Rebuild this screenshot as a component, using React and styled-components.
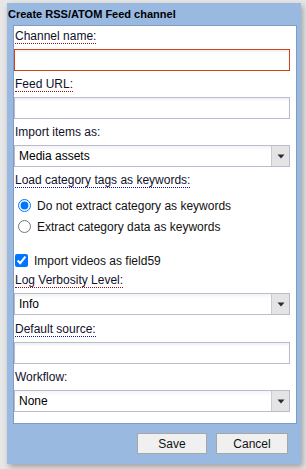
import React from 'react';
import styled, { createGlobalStyle } from 'styled-components';

const Global = createGlobalStyle`
  html, body { margin: 0; padding: 0; }
  body {
    background: #e6e6e6;
    font-family: "Liberation Sans", Arial, sans-serif;
    width: 306px;
    height: 469px;
    overflow: hidden;
  }
`;

const Page = styled.div`
  padding: 3px 0 0 7px;
`;

const Dialog = styled.div`
  width: 294px;
  height: 461px;
  box-sizing: border-box;
  background: #99b9e1;
  box-shadow: 2px 3px 6px rgba(0, 0, 0, 0.3);
  display: flex;
  flex-direction: column;
`;

const Title = styled.div`
  height: 22px;
  line-height: 23px;
  padding-left: 1px;
  font-size: 11px;
  font-weight: bold;
  color: #000;
  white-space: nowrap;
`;

const Panel = styled.div`
  margin: 0 4px 0 6px;
  background: #fff;
  border: 1px solid #7f9cc4;
  padding: 3px 6px 11px 0;
  display: flex;
  flex-direction: column;
`;

const Field = styled.div`
  display: flex;
  flex-direction: column;
  margin-top: ${p => p.$mt ?? 0}px;
`;

const Label = styled.div`
  font-size: 12px;
  line-height: 15px;
  height: 15px;
  color: #10102a;
  padding-left: 1px;
  margin-bottom: ${p => p.$mb ?? 5}px;
  white-space: nowrap;
`;

const LabelText = styled.span`
  border-bottom: ${p => (p.$line ? `1px dotted ${p.$line}` : 'none')};
`;

const TextInput = styled.input`
  box-sizing: border-box;
  width: 100%;
  height: 22px;
  margin: 0;
  border: 1px solid ${p => (p.$error ? '#d4421a' : '#b8bccd')};
  background: #fff;
  box-shadow: inset 0 2px 2px rgba(0, 0, 0, 0.06);
  font: 12px "Liberation Sans", Arial, sans-serif;
  outline: none;
`;

const SelectBox = styled.div`
  box-sizing: border-box;
  width: 100%;
  height: 22px;
  display: flex;
  border: 1px solid #b8bccd;
  background: linear-gradient(#f4f4f4, #fff 5px);
`;

const SelectValue = styled.div`
  flex: 1;
  padding-left: 4px;
  font-size: 12px;
  line-height: 20px;
  color: #000;
`;

const ArrowBox = styled.div`
  width: 17px;
  background: #e4e4e4;
  border-left: 1px solid #c9cbd4;
  display: flex;
  align-items: center;
  justify-content: center;
`;

const OptionGroup = styled.div`
  display: flex;
  flex-direction: column;
  margin-top: ${p => p.$mt ?? 0}px;
`;

const OptionRow = styled.label`
  display: flex;
  align-items: center;
  height: 21px;
  font-size: 12px;
  color: #111;
  white-space: nowrap;
`;

const Radio = styled.input.attrs({ type: 'radio' })`
  width: 13px;
  height: 13px;
  margin: 0 6px 0 4px;
`;

const Check = styled.input.attrs({ type: 'checkbox' })`
  width: 13px;
  height: 13px;
  margin: 0 6px 0 1px;
`;

const Buttons = styled.div`
  display: flex;
  justify-content: flex-end;
  gap: 9px;
  margin-top: 9px;
  padding-right: 13px;
`;

const Button = styled.button`
  box-sizing: border-box;
  width: ${p => p.$w}px;
  height: 21px;
  padding: 0;
  background: #f0f0f0;
  border: 1px solid #a6a6a6;
  font: 12px "Liberation Sans", Arial, sans-serif;
  color: #111;
`;

const Arrow = () => (
  <svg width="8" height="5" viewBox="0 0 8 5">
    <path d="M0.5 0.5 H7.5 L4 4.5 Z" fill="#2a2a3a" />
  </svg>
);

const Select = ({ value }) => (
  <SelectBox>
    <SelectValue>{value}</SelectValue>
    <ArrowBox>
      <Arrow />
    </ArrowBox>
  </SelectBox>
);

export default function App() {
  return (
    <>
      <Global />
      <Page>
        <Dialog>
          <Title>Create RSS/ATOM Feed channel</Title>
          <Panel>
            <Field>
              <Label><LabelText $line="#a01010">Channel name:</LabelText></Label>
              <TextInput $error />
            </Field>
            <Field $mt={6}>
              <Label><LabelText $line="#a01010">Feed URL:</LabelText></Label>
              <TextInput />
            </Field>
            <Field $mt={6}>
              <Label><LabelText>Import items as:</LabelText></Label>
              <Select value="Media assets" />
            </Field>
            <Field $mt={6}>
              <Label $mb={0}>
                <LabelText $line="#1010a0">Load category tags as keywords:</LabelText>
              </Label>
            </Field>
            <OptionGroup $mt={7}>
              <OptionRow>
                <Radio name="cat" defaultChecked />
                Do not extract category as keywords
              </OptionRow>
              <OptionRow>
                <Radio name="cat" />
                Extract category data as keywords
              </OptionRow>
            </OptionGroup>
            <OptionGroup $mt={13}>
              <OptionRow>
                <Check defaultChecked />
                Import videos as field59
              </OptionRow>
            </OptionGroup>
            <Field $mt={2}>
              <Label><LabelText $line="#a01010">Log Verbosity Level:</LabelText></Label>
              <Select value="Info" />
            </Field>
            <Field $mt={7}>
              <Label><LabelText $line="#1010a0">Default source:</LabelText></Label>
              <TextInput />
            </Field>
            <Field $mt={6}>
              <Label><LabelText>Workflow:</LabelText></Label>
              <Select value="None" />
            </Field>
          </Panel>
          <Buttons>
            <Button $w={70}>Save</Button>
            <Button $w={72}>Cancel</Button>
          </Buttons>
        </Dialog>
      </Page>
    </>
  );
}
